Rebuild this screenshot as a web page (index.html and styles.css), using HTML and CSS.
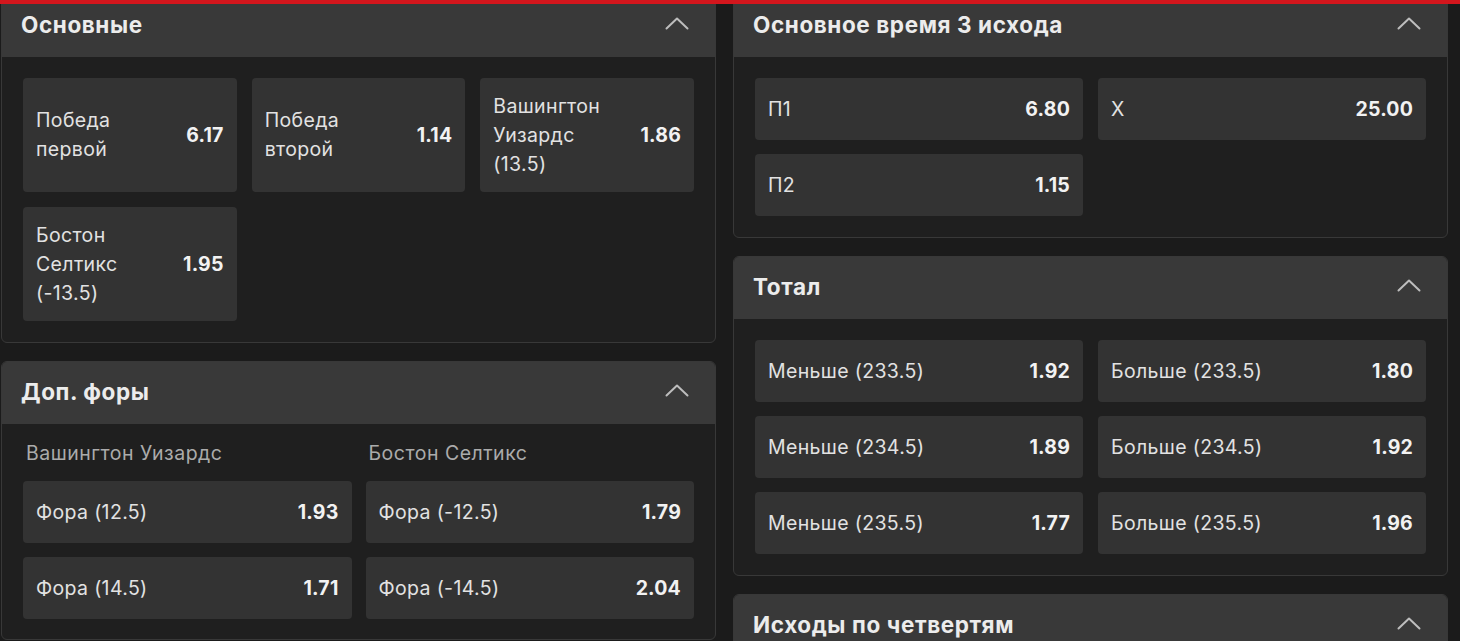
FILE: index.html
```html
<!DOCTYPE html>
<html lang="ru">
<head>
<meta charset="utf-8">
<title>Рынки</title>
<link rel="stylesheet" href="styles.css">
</head>
<body>
<div class="topbar"></div>
<main class="page">
  <section class="col">
    <div class="card">
      <div class="card-head">
        <span class="card-title">Основные</span>
        <svg class="chev" viewBox="0 0 24 13" width="24" height="13"><path d="M1.5 11.5 L12 1.5 L22.5 11.5" fill="none" stroke="currentColor" stroke-width="2" stroke-linecap="round" stroke-linejoin="round"/></svg>
      </div>
      <div class="card-body grid3">
        <div class="cell"><span class="name">Победа<br>первой</span><span class="odd">6.17</span></div>
        <div class="cell"><span class="name">Победа<br>второй</span><span class="odd">1.14</span></div>
        <div class="cell"><span class="name">Вашингтон<br>Уизардс<br>(13.5)</span><span class="odd">1.86</span></div>
        <div class="cell"><span class="name">Бостон<br>Селтикс<br>(-13.5)</span><span class="odd">1.95</span></div>
      </div>
    </div>
    <div class="card">
      <div class="card-head">
        <span class="card-title">Доп. форы</span>
        <svg class="chev" viewBox="0 0 24 13" width="24" height="13"><path d="M1.5 11.5 L12 1.5 L22.5 11.5" fill="none" stroke="currentColor" stroke-width="2" stroke-linecap="round" stroke-linejoin="round"/></svg>
      </div>
      <div class="card-body split">
        <div class="sub-col">
          <div class="sub-title">Вашингтон Уизардс</div>
          <div class="cell"><span class="name">Фора (12.5)</span><span class="odd">1.93</span></div>
          <div class="cell"><span class="name">Фора (14.5)</span><span class="odd">1.71</span></div>
        </div>
        <div class="sub-col">
          <div class="sub-title">Бостон Селтикс</div>
          <div class="cell"><span class="name">Фора (-12.5)</span><span class="odd">1.79</span></div>
          <div class="cell"><span class="name">Фора (-14.5)</span><span class="odd">2.04</span></div>
        </div>
      </div>
    </div>
  </section>
  <section class="col">
    <div class="card">
      <div class="card-head">
        <span class="card-title">Основное время 3 исхода</span>
        <svg class="chev" viewBox="0 0 24 13" width="24" height="13"><path d="M1.5 11.5 L12 1.5 L22.5 11.5" fill="none" stroke="currentColor" stroke-width="2" stroke-linecap="round" stroke-linejoin="round"/></svg>
      </div>
      <div class="card-body grid2">
        <div class="cell"><span class="name">П1</span><span class="odd">6.80</span></div>
        <div class="cell"><span class="name">X</span><span class="odd">25.00</span></div>
        <div class="cell"><span class="name">П2</span><span class="odd">1.15</span></div>
      </div>
    </div>
    <div class="card">
      <div class="card-head">
        <span class="card-title">Тотал</span>
        <svg class="chev" viewBox="0 0 24 13" width="24" height="13"><path d="M1.5 11.5 L12 1.5 L22.5 11.5" fill="none" stroke="currentColor" stroke-width="2" stroke-linecap="round" stroke-linejoin="round"/></svg>
      </div>
      <div class="card-body grid2">
        <div class="cell"><span class="name">Меньше (233.5)</span><span class="odd">1.92</span></div>
        <div class="cell"><span class="name">Больше (233.5)</span><span class="odd">1.80</span></div>
        <div class="cell"><span class="name">Меньше (234.5)</span><span class="odd">1.89</span></div>
        <div class="cell"><span class="name">Больше (234.5)</span><span class="odd">1.92</span></div>
        <div class="cell"><span class="name">Меньше (235.5)</span><span class="odd">1.77</span></div>
        <div class="cell"><span class="name">Больше (235.5)</span><span class="odd">1.96</span></div>
      </div>
    </div>
    <div class="card">
      <div class="card-head">
        <span class="card-title">Исходы по четвертям</span>
        <svg class="chev" viewBox="0 0 24 13" width="24" height="13"><path d="M1.5 11.5 L12 1.5 L22.5 11.5" fill="none" stroke="currentColor" stroke-width="2" stroke-linecap="round" stroke-linejoin="round"/></svg>
      </div>
      <div class="card-body grid2">
        <div class="cell"><span class="name">1-я четверть П1</span><span class="odd">2.10</span></div>
        <div class="cell"><span class="name">1-я четверть П2</span><span class="odd">1.72</span></div>
      </div>
    </div>
  </section>
</main>
</body>
</html>
```

FILE: styles.css
```css
* { box-sizing: border-box; }
html, body {
  margin: 0;
  padding: 0;
  background: #1b1b1b;
  height: 641px;
  overflow: hidden;
}
body {
  font-family: Inter, "Noto Sans", "Liberation Sans", sans-serif;
  color: #e6e6e6;
}
.topbar {
  position: fixed;
  top: 0;
  left: 0;
  right: 0;
  height: 4px;
  background: #d3161d;
  z-index: 5;
}
.page {
  display: grid;
  grid-template-columns: 715px 715px;
  column-gap: 17px;
  padding: 0 13px 0 1px;
  margin-top: -6px;
  align-items: start;
}
.col {
  display: flex;
  flex-direction: column;
  gap: 18px;
}
.card {
  border: 1px solid #383838;
  border-radius: 6px;
  background: #1f1f1f;
  overflow: hidden;
}
.card-head {
  height: 62px;
  background: #393939;
  display: flex;
  align-items: center;
  justify-content: space-between;
  padding: 0 26px 3px 19px;
}
.card-title {
  font-size: 22.5px;
  font-weight: 700;
  color: #ececec;
  letter-spacing: 0.6px;
}
.chev {
  color: #bdbdbd;
  display: block;
  margin-top: -3px;
}
.card-body {
  padding: 21px;
}
.grid3 {
  display: grid;
  grid-template-columns: repeat(3, 1fr);
  gap: 15px;
}
.grid2 {
  display: grid;
  grid-template-columns: 1fr 1fr;
  column-gap: 15px;
  row-gap: 14px;
}
.split {
  display: grid;
  grid-template-columns: 1fr 1fr;
  column-gap: 14px;
  padding-top: 14px;
  padding-bottom: 20px;
}
.sub-col {
  display: flex;
  flex-direction: column;
  gap: 14px;
}
.sub-title {
  font-size: 19.5px;
  line-height: 30px;
  color: #ababab;
  padding-left: 3px;
  letter-spacing: 0.5px;
  margin-bottom: -1px;
}
.cell {
  background: #333333;
  border-radius: 4px;
  min-height: 62px;
  padding: 13.5px 13px;
  display: flex;
  align-items: center;
  justify-content: space-between;
  font-size: 19.5px;
  line-height: 29px;
  letter-spacing: 0.35px;
}
.name {
  color: #e2e2e2;
}
.odd {
  font-weight: 700;
  color: #f2f2f2;
  letter-spacing: 0.2px;
}
```
